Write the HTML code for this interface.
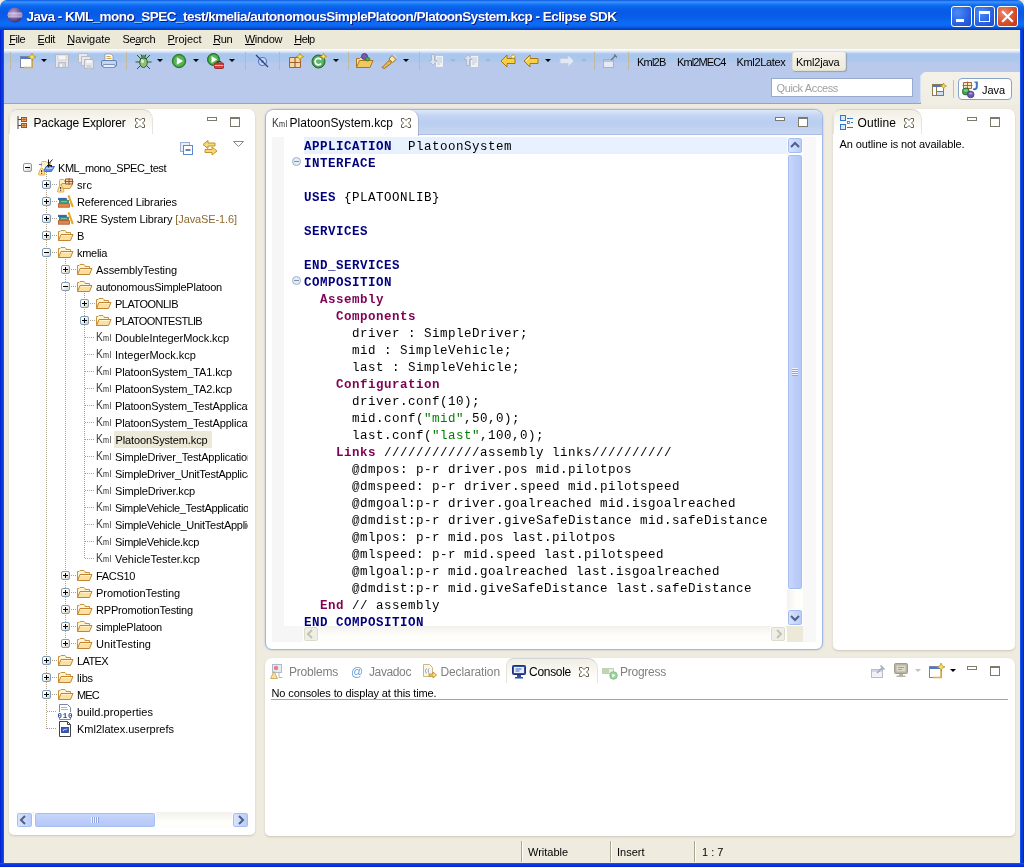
<!DOCTYPE html><html><head><meta charset="utf-8"><title>Java - Eclipse SDK</title><style>
*{box-sizing:border-box}
html,body{margin:0;padding:0}
html{background:#efebdf}
body{will-change:transform;width:1024px;height:867px;position:relative;overflow:hidden;background:#efebdf;font:11px "Liberation Sans",sans-serif;color:#000}
.abs{position:absolute}
#title{left:0;top:0;width:1024px;height:30px;border-radius:7px 7px 0 0;
 background:linear-gradient(#0a56e0 0%,#3a90fb 6%,#2c88f8 10%,#1577f4 14%,#0a68ee 20%,#085ee8 30%,#075ae6 45%,#095fea 60%,#0c68f2 72%,#0e6cf6 80%,#0a62ec 88%,#0650d8 93%,#0342bf 97%,#0338a8 100%)}
#title .txt{left:26.500px;top:9px;font:bold 13.500px "Liberation Sans",sans-serif;color:#fff;text-shadow:1px 1px 0 #0a1883;white-space:pre}
.wb{top:6px;width:21px;height:21px;border:1px solid #fff;border-radius:3px;background:radial-gradient(circle at 30% 30%,#4a8cf8 0%,#2a60e0 60%,#1a4cc8 100%)}
.wb.close{background:radial-gradient(circle at 30% 30%,#ec8a6c 0%,#d8502c 55%,#b93518 100%)}
#lb{left:0;top:30px;width:4px;height:837px;background:linear-gradient(90deg,#0019cf 0,#0831d9 25%,#0a3ce0 75%,#166aee 100%)}
#rb{left:1020px;top:30px;width:4px;height:837px;background:linear-gradient(90deg,#166aee 0,#0a3ce0 25%,#0831d9 75%,#0019cf 100%)}
#bb{left:0;top:863px;width:1024px;height:4px;background:linear-gradient(#166aee 0,#0a3ce0 25%,#0831d9 75%,#0019cf 100%)}
#menu{left:4px;top:30px;width:1016px;height:19px;background:#ece9d8}
#menu span{position:absolute;top:3px;white-space:pre}
#menu i{position:absolute;top:14px;height:1px;background:#000}
#tb{left:4px;top:49px;width:1016px;height:55px;background:linear-gradient(#ffffff 0,#e8eefb 2px,#aac6ec 5px,#adc8ed 12px,#b8c9ec 14px,#b8c9ec 100%)}
#tbline{left:4px;top:103px;width:917px;height:1px;background:#8ea5d3}
#persp{left:921px;top:72px;width:99px;height:33px;background:linear-gradient(#f3f1e9,#f0ede3);border-radius:5px 0 0 0}
.sep{width:1px;height:18px;background:#c2ba9e;top:52px}
.dd{width:0;height:0;border-left:3px solid transparent;border-right:3px solid transparent;border-top:3px solid #000;top:59px}
.ico{top:53px;width:16px;height:16px}
.panel{background:#fff;border-radius:7px 7px 5px 5px;box-shadow:0 1px 2px rgba(120,115,90,.3)}
.tab{font:12px "Liberation Sans",sans-serif;white-space:pre;margin-top:1px}
.tree{font:11px "Liberation Sans",sans-serif;white-space:pre}
.tl{position:absolute;white-space:pre;height:17px;line-height:18px;padding:0 2px}
.code{font:12.5px "Liberation Mono",monospace;letter-spacing:.5px;white-space:pre;line-height:20px;height:17px;position:absolute;left:304px}
.k{color:#00007f;font-weight:bold}
.m{color:#7f0055;font-weight:bold}
.s{color:#007f00}
.pm{width:9px;height:9px;border:1px solid #7f9db9;background:linear-gradient(135deg,#fff 30%,#d4d0c0);border-radius:2px}
.pm:before{content:"";position:absolute;left:1px;top:3px;width:5px;height:1px;background:#000}
.pm.plus:after{content:"";position:absolute;left:3px;top:1px;width:1px;height:5px;background:#000}
.dotv{width:1px;background-image:linear-gradient(#a8a08c 50%,transparent 50%);background-size:1px 2px}
.doth{height:1px;background-image:linear-gradient(90deg,#a8a08c 50%,transparent 50%);background-size:2px 1px}
.sbtn{background:linear-gradient(90deg,#dbe5fd,#b9ccf8);border:1px solid #fff;border-radius:3px;box-shadow:inset 0 0 0 1px #a6bdf4}
</style></head><body>
<div class="abs" id="title"><span class="abs txt" style="letter-spacing:-0.516px">Java - KML_mono_SPEC_test/kmelia/autonomousSimplePlatoon/PlatoonSystem.kcp - Eclipse SDK</span>
<svg class="abs" style="left:6.500px;top:7px" width="16" height="16" viewBox="0 0 17 17"><defs><radialGradient id="eg" cx="40%" cy="35%" r="70%"><stop offset="0" stop-color="#b9a0d8"/><stop offset="1" stop-color="#3b2a6e"/></radialGradient></defs><circle cx="8.5" cy="8.5" r="8" fill="url(#eg)"/><rect x="1" y="6" width="15" height="1" fill="#e8ddf5"/><rect x="0.5" y="8" width="16" height="1" fill="#e8ddf5"/><rect x="1" y="10" width="15" height="1" fill="#e8ddf5"/></svg>
<div class="abs wb" style="left:951px"><div class="abs" style="left:4px;top:12px;width:8px;height:3px;background:#fff"></div></div>
<div class="abs wb" style="left:974px"><div class="abs" style="left:4px;top:4px;width:11px;height:11px;border:1px solid #fff;border-top-width:3px"></div></div>
<div class="abs wb close" style="left:997px"><svg width="19" height="19" viewBox="0 0 19 19"><path d="M5 5l9 9M14 5l-9 9" stroke="#fff" stroke-width="2.2" stroke-linecap="square"/></svg></div>
</div>
<div class="abs" id="lb"></div><div class="abs" id="rb"></div><div class="abs" id="bb"></div>
<div class="abs" id="menu">
<span style="left:5.3px;letter-spacing:-0.434px">File</span>
<span style="left:33.5px;letter-spacing:-0.367px">Edit</span>
<span style="left:63.3px;letter-spacing:-0.053px">Navigate</span>
<span style="left:118.5px;letter-spacing:-0.343px">Search</span>
<span style="left:163.5px;letter-spacing:-0.036px">Project</span>
<span style="left:209.3px;letter-spacing:-0.396px">Run</span>
<span style="left:240.7px;letter-spacing:-0.271px">Window</span>
<span style="left:290.3px;letter-spacing:-0.581px">Help</span>
<i style="left:5px;width:6px"></i><i style="left:34px;width:6px"></i><i style="left:63px;width:7px"></i><i style="left:131px;width:5px"></i><i style="left:164px;width:7px"></i><i style="left:209px;width:7px"></i><i style="left:241px;width:10px"></i><i style="left:290px;width:7px"></i>
</div>
<div class="abs" id="tb"></div><div class="abs" id="tbline"></div><div class="abs" id="persp"></div>
<div class="abs sep" style="left:10px"></div>
<div class="abs sep" style="left:126px"></div>
<div class="abs sep" style="left:245px"></div>
<div class="abs sep" style="left:279px"></div>
<div class="abs sep" style="left:348px"></div>
<div class="abs sep" style="left:419px"></div>
<div class="abs sep" style="left:594px"></div>
<div class="abs sep" style="left:628px"></div>
<div class="abs dd" style="left:41px"></div>
<div class="abs dd" style="left:157px"></div>
<div class="abs dd" style="left:193px"></div>
<div class="abs dd" style="left:229px"></div>
<div class="abs dd" style="left:333px"></div>
<div class="abs dd" style="left:403px"></div>
<div class="abs dd" style="left:545px"></div>
<div class="abs dd" style="left:450px;border-top-color:#a9b4cc"></div>
<div class="abs dd" style="left:485px;border-top-color:#a9b4cc"></div>
<div class="abs dd" style="left:581px;border-top-color:#a9b4cc"></div>
<svg class="abs" style="left:20px;top:53px" width="16" height="16" viewBox="0 0 16 16"><rect x="0.5" y="3.5" width="12" height="11" fill="#fff" stroke="#7a86a8"/><rect x="1" y="4" width="11" height="2" fill="#4d78c8"/><path d="M12 8v6.5H4" fill="none" stroke="#e0b040" stroke-width="1.5"/><path d="M12 0l1.2 2.8L16 4l-2.8 1.2L12 8l-1.2-2.8L8 4l2.800-1.200z" fill="#f8e060" stroke="#b88a18" stroke-width=".7"/></svg>
<svg class="abs" style="left:54px;top:53px" width="16" height="16" viewBox="0 0 16 16"><path d="M1.500 1.500h13v13h-13z" fill="#e4e6ea" stroke="#b4b8c0"/><rect x="4" y="2" width="8" height="5" fill="#f6f6f8" stroke="#c0c4cc" stroke-width=".6"/><rect x="4.500" y="9.500" width="7" height="5" fill="#d4d6dc" stroke="#b4b8c0" stroke-width=".8"/><rect x="6" y="11" width="2" height="3" fill="#f4f4f6"/></svg>
<svg class="abs" style="left:78px;top:53px" width="16" height="16" viewBox="0 0 16 16"><path d="M0.500 0.500h9v9h-9z" fill="#e8eaee" stroke="#b8bcc4"/><path d="M3.500 3.500h9v9h-9z" fill="#e8eaee" stroke="#b8bcc4"/><path d="M6.500 6.500h9v9h-9z" fill="#e4e6ea" stroke="#b4b8c0"/><rect x="8.500" y="7" width="5" height="3" fill="#f6f6f8"/><rect x="8.500" y="12" width="5" height="3.500" fill="#d0d2d8"/></svg>
<svg class="abs" style="left:101px;top:53px" width="16" height="16" viewBox="0 0 16 16"><path d="M4 1h6l2 2v5H4z" fill="#fff" stroke="#8a93a8" stroke-width=".8"/><path d="M5.500 3.500h4M5.500 5.500h5" stroke="#d8a040" stroke-width="1"/><rect x="0.500" y="7.500" width="15" height="6" rx="1.500" fill="#c6d4ee" stroke="#5f7fb8"/><rect x="2" y="11.500" width="12" height="3" rx="1" fill="#e8eefa" stroke="#5f7fb8" stroke-width=".8"/></svg>
<svg class="abs" style="left:135px;top:53px" width="17" height="17" viewBox="0 0 17 17"><path d="M2 2l4 4M15 2l-4 4M0.500 9H5M16.500 9H12M2 16l4-4M15 16l-4-4M6 1.500l1.500 3M11 1.500l-1.500 3" stroke="#2a5a2a" stroke-width="1"/><ellipse cx="8.500" cy="9.500" rx="3.800" ry="5" fill="#8fbf7a" stroke="#2f5f2f"/><ellipse cx="7.500" cy="8" rx="1.500" ry="2.200" fill="#d6efc8"/><circle cx="8.500" cy="4.200" r="1.800" fill="#5a8f4a" stroke="#2f5f2f" stroke-width=".6"/></svg>
<svg class="abs" style="left:171px;top:53px" width="16" height="16" viewBox="0 0 16 16"><circle cx="8" cy="8" r="6.700" fill="#3c9a3c" stroke="#2a7a2a"/><circle cx="8" cy="8" r="5.300" fill="#58b458"/><path d="M5.800 4.200v7.600L12 8z" fill="#fff"/></svg>
<svg class="abs" style="left:207px;top:53px" width="17" height="16" viewBox="0 0 17 16"><circle cx="6.500" cy="6.500" r="6" fill="#3c9a3c" stroke="#1f6a1f"/><circle cx="6.500" cy="6.500" r="4.700" fill="#58b458"/><path d="M4.500 3v7L10.200 6.500z" fill="#fff"/><rect x="7.500" y="10" width="9" height="5.500" rx="1" fill="#d84040" stroke="#8a1c1c" stroke-width=".8"/><path d="M10 10V8.500h4V10" fill="none" stroke="#8a1c1c" stroke-width="1"/><rect x="7.500" y="12" width="9" height="1" fill="#f6b0a8"/></svg>
<svg class="abs" style="left:255px;top:54px" width="14" height="14" viewBox="0 0 14 14"><circle cx="7.500" cy="7.500" r="4" fill="#c8d8f0" stroke="#5a7cc0" stroke-width="1.200"/><circle cx="7.500" cy="7.500" r="1.500" fill="#7a98d0"/><path d="M1 1l12 12" stroke="#2a3f8a" stroke-width="1.300"/></svg>
<svg class="abs" style="left:288px;top:53px" width="16" height="16" viewBox="0 0 16 16"><path d="M1.500 4.500h11v10h-11z" fill="#f4d8a8" stroke="#a0622a"/><path d="M7 4.500v10M1.500 9.500h11" stroke="#a0622a" stroke-width="1.200"/><path d="M12 0l1.100 2.600L15.800 3.700l-2.700 1.100L12 7.500l-1.100-2.700L8.200 3.700l2.700-1.100z" fill="#f8e060" stroke="#b88a18" stroke-width=".7"/></svg>
<svg class="abs" style="left:311px;top:53px" width="16" height="16" viewBox="0 0 16 16"><circle cx="7.500" cy="8.500" r="6.500" fill="#3f9f4f" stroke="#1f6a2f"/><circle cx="7.500" cy="8.500" r="5" fill="#5cb86a"/><path d="M10 6.800a3.200 3.200 0 1 0 0 3.600" fill="none" stroke="#fff" stroke-width="1.700"/><path d="M12.500 0l1 2.400 2.400 1-2.400 1-1 2.400-1-2.400-2.400-1 2.400-1z" fill="#f8e060" stroke="#b88a18" stroke-width=".7"/></svg>
<svg class="abs" style="left:356px;top:53px" width="18" height="16" viewBox="0 0 18 16"><path d="M0.500 14.500v-9h3l1.500-1.500h6v2h3.500" fill="#f8e0a0" stroke="#a87820"/><path d="M0.500 14.500l3-7h13.500l-3 7z" fill="#f2c860" stroke="#a87820"/><circle cx="8.500" cy="3.500" r="3" fill="#7a5ab0" stroke="#40287a" stroke-width=".8"/><circle cx="11.500" cy="6" r="2" fill="#4fa84f" stroke="#1f6a1f" stroke-width=".6"/></svg>
<svg class="abs" style="left:381px;top:53px" width="17" height="16" viewBox="0 0 17 16"><path d="M1 14.500l7-7 2.500 2.500-7 5.500z" fill="#e8b84a" stroke="#9a6a10" stroke-width=".9"/><path d="M8 6l3-3.500 4 4L11.500 9.500z" fill="#f8e8a8" stroke="#9a6a10" stroke-width=".9"/><path d="M12.500 1.500l3 3" stroke="#c8d4e8" stroke-width="2"/></svg>
<svg class="abs" style="left:429px;top:54px" width="16" height="15" viewBox="0 0 16 15"><path d="M6.500 1.500h8v12h-8z" fill="#eef1f6" stroke="#c0c6d4"/><path d="M8 4h5M8 6h5M8 8h5M8 10h3" stroke="#c4cad8" stroke-width="1"/><path d="M2.500 0.500h3v6h2.500l-4 5-4-5h2.500z" fill="#dde3ee" stroke="#a9b3c8" stroke-width=".9"/></svg>
<svg class="abs" style="left:464px;top:54px" width="16" height="15" viewBox="0 0 16 15"><path d="M6.500 1.500h8v12h-8z" fill="#eef1f6" stroke="#c0c6d4"/><path d="M8 4h5M8 6h5M8 8h5M8 10h3" stroke="#c4cad8" stroke-width="1"/><path d="M4 0.500l4 5h-2.500v6h-3v-6H0z" fill="#dde3ee" stroke="#a9b3c8" stroke-width=".9"/></svg>
<svg class="abs" style="left:500px;top:54px" width="18" height="14" viewBox="0 0 18 14"><path d="M7 1L1 7l6 6V9.500h8v-5H7z" fill="#f8d048" stroke="#a87810" stroke-width="1"/><path d="M13 0l.8 1.800L15.600 2.600l-1.800.8L13 5.200l-.8-1.800-1.800-.8 1.800-.8z" fill="#fff8c0" stroke="#b88a18" stroke-width=".5"/></svg>
<svg class="abs" style="left:523px;top:54px" width="16" height="14" viewBox="0 0 16 14"><path d="M7 1L1 7l6 6V9.500h8v-5H7z" fill="#f8d048" stroke="#a87810" stroke-width="1"/><path d="M7 3.200L3 7" stroke="#fff2b0" stroke-width="1"/></svg>
<svg class="abs" style="left:559px;top:54px" width="16" height="14" viewBox="0 0 16 14"><path d="M9 1l6 6-6 6V9.500H1v-5h8z" fill="#e2e8f4" stroke="#c4cce0" stroke-width="1"/></svg>
<svg class="abs" style="left:603px;top:54px" width="15" height="14" viewBox="0 0 15 14"><rect x="0.500" y="5.500" width="10" height="8" fill="#e6eaf2" stroke="#a8b0c4"/><rect x="1" y="6" width="9" height="2" fill="#b8c4dc"/><path d="M8 6l5-5M11 0.500l3 3" stroke="#6a7488" stroke-width="1.200"/></svg>
<span class="abs" style="left:637px;top:56px;white-space:pre;letter-spacing:-0.781px">Kml2B</span>
<span class="abs" style="left:677px;top:56px;white-space:pre;letter-spacing:-0.891px">Kml2MEC4</span>
<span class="abs" style="left:736.5px;top:56px;white-space:pre;letter-spacing:-0.332px">Kml2Latex</span>
<div class="abs" style="left:792px;top:51px;width:54px;height:20px;background:linear-gradient(#f6f4ec,#ece9dc);border:1px solid #e2dfd2;border-radius:3px;box-shadow:1px 1px 1px rgba(110,110,100,.45)"></div>
<span class="abs" style="left:796px;top:56px;white-space:pre;letter-spacing:-0.219px">Kml2java</span>
<div class="abs" style="left:771px;top:78px;width:142px;height:19px;background:#fff;border:1px solid #98aad0"></div>
<span class="abs" style="left:776.500px;top:81.500px;color:#a0a0a0;font-size:11px;white-space:pre;letter-spacing:-0.378px">Quick Access</span>
<div class="abs" style="left:916px;top:75px;width:5px;height:28px;border-right:1px solid #d6e0f4;border-radius:0 0 4px 0"></div>
<svg class="abs" style="left:932px;top:83px" width="15" height="13" viewBox="0 0 15 13"><rect x="0.500" y="1.500" width="11" height="11" fill="#fff" stroke="#8a7a50"/><rect x="1" y="2" width="10" height="2" fill="#4d78c8"/><path d="M4.500 4v8.500M4.500 8.500h7" stroke="#8a7a50"/><rect x="5" y="9" width="6" height="3" fill="#cfe0f4"/><path d="M11.500 0l.9 2.100 2.100.9-2.100.9-.9 2.100-.9-2.100-2.100-.9 2.100-.9z" fill="#f8e060" stroke="#b88a18" stroke-width=".7"/></svg>
<div class="abs" style="left:953px;top:80px;width:1px;height:18px;background:#c8c0a4"></div>
<div class="abs" style="left:958px;top:78px;width:54px;height:22px;background:#fff;border:1px solid #86a3c8;border-radius:4px"></div>
<svg class="abs" style="left:962px;top:81px" width="17" height="18" viewBox="0 0 17 18"><path d="M1.500 1.500h8v6h-8zM5.500 0.500v7.500M0.500 4.500h10" fill="#f8e4c8" stroke="#a8683a" stroke-width="1"/><path d="M14.800 1v5.200a2.200 2.200 0 0 1-3.600 1.500" fill="none" stroke="#3a78c0" stroke-width="2"/><path d="M12.500 1.200h3.300" stroke="#3a78c0" stroke-width="1.400"/><circle cx="3.800" cy="10.500" r="3.500" fill="#3f9f4f" stroke="#1f6a2f" stroke-width=".8"/><ellipse cx="3.800" cy="9.500" rx="2.200" ry="1.200" fill="#7fcf8a"/><circle cx="8.700" cy="13.500" r="3.300" fill="#6a58b0" stroke="#483088" stroke-width=".8"/><ellipse cx="8.700" cy="12.500" rx="2" ry="1.100" fill="#a898d8"/></svg>
<span class="abs" style="left:982px;top:84px;white-space:pre">Java</span>
<div class="abs panel" style="left:9px;top:109px;width:246px;height:726px"></div>
<div class="abs" style="left:9px;top:109px;width:144px;height:25px;border-radius:8px 10px 0 0;border:1px solid #e6e4da;border-top-color:#cfd5df;border-bottom:none;background:linear-gradient(#f1eee3 0,#f8f7f1 45%,#fff 90%)"></div>
<svg class="abs" style="left:17px;top:116px" width="10" height="13" viewBox="0 0 10 13"><path d="M1 0v13M1 3.500h3M1 9.500h3" stroke="#444" stroke-width="1" fill="none"/><rect x="4.500" y="1.500" width="5" height="4" fill="#f0b070" stroke="#a0522a"/><rect x="4.500" y="7.500" width="5" height="4" fill="#f0b070" stroke="#a0522a"/><path d="M7 1.500v4M7 7.500v4M4.500 3.500h5M4.500 9.500h5" stroke="#a0522a" stroke-width=".7"/></svg>
<span class="abs tab" style="left:33.500px;top:115px;letter-spacing:-0.170px">Package Explorer</span>
<svg class="abs" style="left:135px;top:118px" width="10" height="10" viewBox="0 0 10 10"><path d="M0.500 0.500H3L5 2.500L7 0.500H9.500V3L7.500 5L9.500 7V9.500H7L5 7.500L3 9.500H0.500V7L2.500 5L0.500 3Z" fill="#fff" stroke="#66624f" stroke-width="1"/></svg>
<div class="abs" style="left:207px;top:117px;width:10px;height:4px;border:1px solid #7d7a6b;background:#fff"></div><div class="abs" style="left:230px;top:117px;width:10px;height:10px;border:1px solid #7d7a6b;border-top-width:2px;background:#fff"></div>
<svg class="abs" style="left:180px;top:142px" width="14" height="13" viewBox="0 0 14 13"><rect x="0.500" y="0.500" width="9" height="9" fill="#e8eef8" stroke="#9ab0d8"/><rect x="3.500" y="3.500" width="9" height="9" fill="#fff" stroke="#5f86c8"/><path d="M5.500 8h5" stroke="#1f4fa8" stroke-width="1.400"/></svg>
<svg class="abs" style="left:202px;top:140px" width="16" height="16" viewBox="0 0 16 16"><path d="M6 0.500L1 4.500l5 4V6h7V3H6z" fill="#f8d878" stroke="#c08a18" stroke-width=".9"/><path d="M10 7l5 4-5 4v-2.500H3v-3h7z" fill="#f8d878" stroke="#c08a18" stroke-width=".9"/></svg>
<svg class="abs" style="left:233px;top:141px" width="11" height="6" viewBox="0 0 11 6"><path d="M0.500 0.500h10l-5 5z" fill="#fff" stroke="#7a7a7a" stroke-width=".9"/></svg>
<div class="abs" style="left:16px;top:159px;width:232px;height:652px;overflow:hidden">
<div class="abs dotv" style="left:30px;top:13px;height:557px"></div>
<div class="abs dotv" style="left:49px;top:98px;height:387px"></div>
<div class="abs dotv" style="left:68px;top:132px;height:268px"></div>
<div class="abs pm " style="left:7px;top:4px"></div>
<svg class="abs" style="left:22px;top:0px" width="17" height="17" viewBox="0 0 17 17"><path d="M3.500 7.500V3.500Q3.500 2.500 4.500 2.500H8L9 3.500H12.500V7.500" fill="#fdf0c4" stroke="#e0b060" stroke-width=".9"/><path d="M1 5.500h3" stroke="#7a6ab0" stroke-width="1"/><path d="M5.500 12.500L8 7.500H16.500L13.500 12.500z" fill="#5b8ff0" stroke="#3058c0" stroke-width=".8"/><path d="M8.500 8.500h6.500l-.8 1.300H7.800z" fill="#cfe0fb"/><path d="M10.500 0.500v8M10.500 5l4-4.500M10.500 5l3.500 3M9 6.500h5" stroke="#1a1a1a" stroke-width="1" fill="none"/><g transform="translate(0 8.500)"><path d="M3.500 0.500Q4.500 0.500 5 1.500L7 6.500Q7 7.500 6 7.500H1.500Q0.500 7.500 0.500 6.500L2.500 1.500Q3 0.500 3.500 0.500z" fill="#fde9a8" stroke="#e0a030" stroke-width=".9"/><path d="M3.700 2.500v2.300M3.700 5.600v.9" stroke="#222" stroke-width="1"/></g></svg>
<span class="tl" style="left:40px;top:0px;letter-spacing:-0.454px">KML_mono_SPEC_test</span>
<div class="abs doth" style="left:36px;top:25px;width:5px"></div>
<div class="abs pm plus" style="left:26px;top:21px"></div>
<svg class="abs" style="left:41px;top:19px" width="17" height="15" viewBox="0 0 17 15"><path d="M2.500 10.500V2.500Q2.500 1.500 3.500 1.500H6.500L7.500 2.500H9.500V5" fill="#fdf0c4" stroke="#d8a048" stroke-width=".9"/><path d="M2.500 10.500L5 5.500H16L13 10.500z" fill="#fbdc98" stroke="#c88a38" stroke-width=".9"/><path d="M8.500 1h7v5h-7zM12 0v6.500M7.500 3.500h9" fill="#f4d4b0" stroke="#8a4a2a" stroke-width=".9"/><g transform="translate(0 6.500)"><path d="M3.500 0.500Q4.500 0.500 5 1.500L7 6.500Q7 7.500 6 7.500H1.500Q0.500 7.500 0.500 6.500L2.500 1.500Q3 0.500 3.500 0.500z" fill="#fde9a8" stroke="#e0a030" stroke-width=".9"/><path d="M3.700 2.500v2.300M3.700 5.600v.9" stroke="#222" stroke-width="1"/></g></svg>
<span class="tl" style="left:59px;top:17px;letter-spacing:0.109px">src</span>
<div class="abs doth" style="left:36px;top:42px;width:5px"></div>
<div class="abs pm plus" style="left:26px;top:38px"></div>
<svg class="abs" style="left:42px;top:35px" width="16" height="14" viewBox="0 0 16 14"><g transform="translate(0 .7)"><rect x="0.500" y="3.500" width="8" height="1.500" fill="#2a6ac8" stroke="#1f4f9f" stroke-width=".6"/><rect x="1.500" y="5.500" width="9" height="3" fill="#3aa078" stroke="#1f6f4f" stroke-width=".7"/><path d="M3 7h6" stroke="#9fd8b8" stroke-width=".8"/><rect x="0.500" y="9" width="11" height="3.500" fill="#e08850" stroke="#b8501c" stroke-width=".8"/><path d="M10.800 1.500l3.700 10" fill="none" stroke="#e8a820" stroke-width="2.200" stroke-dasharray="1.600 1.400" stroke-linecap="round"/></g></svg>
<span class="tl" style="left:59px;top:34px;letter-spacing:-0.106px">Referenced Libraries</span>
<div class="abs doth" style="left:36px;top:59px;width:5px"></div>
<div class="abs pm plus" style="left:26px;top:55px"></div>
<svg class="abs" style="left:42px;top:52px" width="16" height="14" viewBox="0 0 16 14"><g transform="translate(0 .7)"><rect x="0.500" y="3.500" width="8" height="1.500" fill="#2a6ac8" stroke="#1f4f9f" stroke-width=".6"/><rect x="1.500" y="5.500" width="9" height="3" fill="#3aa078" stroke="#1f6f4f" stroke-width=".7"/><path d="M3 7h6" stroke="#9fd8b8" stroke-width=".8"/><rect x="0.500" y="9" width="11" height="3.500" fill="#e08850" stroke="#b8501c" stroke-width=".8"/><path d="M10.800 1.500l3.700 10" fill="none" stroke="#e8a820" stroke-width="2.200" stroke-dasharray="1.600 1.400" stroke-linecap="round"/></g></svg>
<span class="tl" style="left:59px;top:51px;letter-spacing:-0.104px">JRE System Library <span style="color:#8a6a32">[JavaSE-1.6]</span></span>
<div class="abs doth" style="left:36px;top:76px;width:5px"></div>
<div class="abs pm plus" style="left:26px;top:72px"></div>
<svg class="abs" style="left:42px;top:71px" width="16" height="11" viewBox="0 0 16 11"><path d="M0.500 10.500V1.500H2L3 0.500H7L8 1.500V2.500H12.500V4.500" fill="#fff4d4" stroke="#c8923e"/><path d="M0.500 10.500L3 4.500H15L12.500 10.500Z" fill="#fbe0a0" stroke="#c08434"/><path d="M3.600 5.500H13.500" stroke="#fff3cf" stroke-width="1"/></svg>
<span class="tl" style="left:59px;top:68px;letter-spacing:-0.344px">B</span>
<div class="abs doth" style="left:36px;top:93px;width:5px"></div>
<div class="abs pm " style="left:26px;top:89px"></div>
<svg class="abs" style="left:42px;top:88px" width="16" height="11" viewBox="0 0 16 11"><path d="M0.500 10.500V1.500H2L3 0.500H7L8 1.500V2.500H12.500V4.500" fill="#fff4d4" stroke="#c8923e"/><path d="M0.500 10.500L3 4.500H15L12.500 10.500Z" fill="#fbe0a0" stroke="#c08434"/><path d="M3.600 5.500H13.500" stroke="#fff3cf" stroke-width="1"/></svg>
<span class="tl" style="left:59px;top:85px;letter-spacing:-0.299px">kmelia</span>
<div class="abs doth" style="left:55px;top:110px;width:5px"></div>
<div class="abs pm plus" style="left:45px;top:106px"></div>
<svg class="abs" style="left:61px;top:105px" width="16" height="11" viewBox="0 0 16 11"><path d="M0.500 10.500V1.500H2L3 0.500H7L8 1.500V2.500H12.500V4.500" fill="#fff4d4" stroke="#c8923e"/><path d="M0.500 10.500L3 4.500H15L12.500 10.500Z" fill="#fbe0a0" stroke="#c08434"/><path d="M3.600 5.500H13.500" stroke="#fff3cf" stroke-width="1"/></svg>
<span class="tl" style="left:78px;top:102px;letter-spacing:-0.103px">AssemblyTesting</span>
<div class="abs doth" style="left:55px;top:127px;width:5px"></div>
<div class="abs pm " style="left:45px;top:123px"></div>
<svg class="abs" style="left:61px;top:122px" width="16" height="11" viewBox="0 0 16 11"><path d="M0.500 10.500V1.500H2L3 0.500H7L8 1.500V2.500H12.500V4.500" fill="#fff4d4" stroke="#c8923e"/><path d="M0.500 10.500L3 4.500H15L12.500 10.500Z" fill="#fbe0a0" stroke="#c08434"/><path d="M3.600 5.500H13.500" stroke="#fff3cf" stroke-width="1"/></svg>
<span class="tl" style="left:78px;top:119px;letter-spacing:-0.238px">autonomousSimplePlatoon</span>
<div class="abs doth" style="left:74px;top:144px;width:5px"></div>
<div class="abs pm plus" style="left:64px;top:140px"></div>
<svg class="abs" style="left:80px;top:139px" width="16" height="11" viewBox="0 0 16 11"><path d="M0.500 10.500V1.500H2L3 0.500H7L8 1.500V2.500H12.500V4.500" fill="#fff4d4" stroke="#c8923e"/><path d="M0.500 10.500L3 4.500H15L12.500 10.500Z" fill="#fbe0a0" stroke="#c08434"/><path d="M3.600 5.500H13.500" stroke="#fff3cf" stroke-width="1"/></svg>
<span class="tl" style="left:97px;top:136px;letter-spacing:-0.506px">PLATOONLIB</span>
<div class="abs doth" style="left:74px;top:161px;width:5px"></div>
<div class="abs pm plus" style="left:64px;top:157px"></div>
<svg class="abs" style="left:80px;top:156px" width="16" height="11" viewBox="0 0 16 11"><path d="M0.500 10.500V1.500H2L3 0.500H7L8 1.500V2.500H12.500V4.500" fill="#fff4d4" stroke="#c8923e"/><path d="M0.500 10.500L3 4.500H15L12.500 10.500Z" fill="#fbe0a0" stroke="#c08434"/><path d="M3.600 5.500H13.500" stroke="#fff3cf" stroke-width="1"/></svg>
<span class="tl" style="left:97px;top:153px;letter-spacing:-0.656px">PLATOONTESTLIB</span>
<div class="abs doth" style="left:69px;top:178px;width:9px"></div>
<span class="abs" style="left:79.5px;top:170.5px;font:12.500px 'Liberation Sans',sans-serif;color:#3a3a3a;transform:scaleX(.82);transform-origin:0 0;line-height:14px;height:14px">K</span><span class="abs" style="left:86.5px;top:174.5px;font:8.500px 'Liberation Sans',sans-serif;color:#1a1a1a;line-height:9px;height:9px;transform:scaleX(.85);transform-origin:0 0;letter-spacing:.8px">ml</span>
<span class="tl" style="left:97px;top:170px;letter-spacing:-0.074px">DoubleIntegerMock.kcp</span>
<div class="abs doth" style="left:69px;top:195px;width:9px"></div>
<span class="abs" style="left:79.5px;top:187.5px;font:12.500px 'Liberation Sans',sans-serif;color:#3a3a3a;transform:scaleX(.82);transform-origin:0 0;line-height:14px;height:14px">K</span><span class="abs" style="left:86.5px;top:191.5px;font:8.500px 'Liberation Sans',sans-serif;color:#1a1a1a;line-height:9px;height:9px;transform:scaleX(.85);transform-origin:0 0;letter-spacing:.8px">ml</span>
<span class="tl" style="left:97px;top:187px;letter-spacing:0.020px">IntegerMock.kcp</span>
<div class="abs doth" style="left:69px;top:212px;width:9px"></div>
<span class="abs" style="left:79.5px;top:204.5px;font:12.500px 'Liberation Sans',sans-serif;color:#3a3a3a;transform:scaleX(.82);transform-origin:0 0;line-height:14px;height:14px">K</span><span class="abs" style="left:86.5px;top:208.5px;font:8.500px 'Liberation Sans',sans-serif;color:#1a1a1a;line-height:9px;height:9px;transform:scaleX(.85);transform-origin:0 0;letter-spacing:.8px">ml</span>
<span class="tl" style="left:97px;top:204px;letter-spacing:-0.126px">PlatoonSystem_TA1.kcp</span>
<div class="abs doth" style="left:69px;top:229px;width:9px"></div>
<span class="abs" style="left:79.5px;top:221.5px;font:12.500px 'Liberation Sans',sans-serif;color:#3a3a3a;transform:scaleX(.82);transform-origin:0 0;line-height:14px;height:14px">K</span><span class="abs" style="left:86.5px;top:225.5px;font:8.500px 'Liberation Sans',sans-serif;color:#1a1a1a;line-height:9px;height:9px;transform:scaleX(.85);transform-origin:0 0;letter-spacing:.8px">ml</span>
<span class="tl" style="left:97px;top:221px;letter-spacing:-0.126px">PlatoonSystem_TA2.kcp</span>
<div class="abs doth" style="left:69px;top:246px;width:9px"></div>
<span class="abs" style="left:79.5px;top:238.5px;font:12.500px 'Liberation Sans',sans-serif;color:#3a3a3a;transform:scaleX(.82);transform-origin:0 0;line-height:14px;height:14px">K</span><span class="abs" style="left:86.5px;top:242.5px;font:8.500px 'Liberation Sans',sans-serif;color:#1a1a1a;line-height:9px;height:9px;transform:scaleX(.85);transform-origin:0 0;letter-spacing:.8px">ml</span>
<span class="tl" style="left:97px;top:238px;letter-spacing:-0.154px">PlatoonSystem_TestApplication1.kcp</span>
<div class="abs doth" style="left:69px;top:263px;width:9px"></div>
<span class="abs" style="left:79.5px;top:255.5px;font:12.500px 'Liberation Sans',sans-serif;color:#3a3a3a;transform:scaleX(.82);transform-origin:0 0;line-height:14px;height:14px">K</span><span class="abs" style="left:86.5px;top:259.5px;font:8.500px 'Liberation Sans',sans-serif;color:#1a1a1a;line-height:9px;height:9px;transform:scaleX(.85);transform-origin:0 0;letter-spacing:.8px">ml</span>
<span class="tl" style="left:97px;top:255px;letter-spacing:-0.154px">PlatoonSystem_TestApplication2.kcp</span>
<div class="abs doth" style="left:69px;top:280px;width:9px"></div>
<span class="abs" style="left:79.5px;top:272.5px;font:12.500px 'Liberation Sans',sans-serif;color:#3a3a3a;transform:scaleX(.82);transform-origin:0 0;line-height:14px;height:14px">K</span><span class="abs" style="left:86.5px;top:276.5px;font:8.500px 'Liberation Sans',sans-serif;color:#1a1a1a;line-height:9px;height:9px;transform:scaleX(.85);transform-origin:0 0;letter-spacing:.8px">ml</span>
<span class="tl" style="left:97px;top:272px;background:#ece9d8;margin-left:1px;padding-left:1.500px;padding-right:4.500px;letter-spacing:-0.127px">PlatoonSystem.kcp</span>
<div class="abs doth" style="left:69px;top:297px;width:9px"></div>
<span class="abs" style="left:79.5px;top:289.5px;font:12.500px 'Liberation Sans',sans-serif;color:#3a3a3a;transform:scaleX(.82);transform-origin:0 0;line-height:14px;height:14px">K</span><span class="abs" style="left:86.5px;top:293.5px;font:8.500px 'Liberation Sans',sans-serif;color:#1a1a1a;line-height:9px;height:9px;transform:scaleX(.85);transform-origin:0 0;letter-spacing:.8px">ml</span>
<span class="tl" style="left:97px;top:289px;letter-spacing:-0.183px">SimpleDriver_TestApplication.kcp</span>
<div class="abs doth" style="left:69px;top:314px;width:9px"></div>
<span class="abs" style="left:79.5px;top:306.5px;font:12.500px 'Liberation Sans',sans-serif;color:#3a3a3a;transform:scaleX(.82);transform-origin:0 0;line-height:14px;height:14px">K</span><span class="abs" style="left:86.5px;top:310.5px;font:8.500px 'Liberation Sans',sans-serif;color:#1a1a1a;line-height:9px;height:9px;transform:scaleX(.85);transform-origin:0 0;letter-spacing:.8px">ml</span>
<span class="tl" style="left:97px;top:306px;letter-spacing:-0.251px">SimpleDriver_UnitTestApplication.kcp</span>
<div class="abs doth" style="left:69px;top:331px;width:9px"></div>
<span class="abs" style="left:79.5px;top:323.5px;font:12.500px 'Liberation Sans',sans-serif;color:#3a3a3a;transform:scaleX(.82);transform-origin:0 0;line-height:14px;height:14px">K</span><span class="abs" style="left:86.5px;top:327.5px;font:8.500px 'Liberation Sans',sans-serif;color:#1a1a1a;line-height:9px;height:9px;transform:scaleX(.85);transform-origin:0 0;letter-spacing:.8px">ml</span>
<span class="tl" style="left:97px;top:323px;letter-spacing:-0.158px">SimpleDriver.kcp</span>
<div class="abs doth" style="left:69px;top:348px;width:9px"></div>
<span class="abs" style="left:79.5px;top:340.5px;font:12.500px 'Liberation Sans',sans-serif;color:#3a3a3a;transform:scaleX(.82);transform-origin:0 0;line-height:14px;height:14px">K</span><span class="abs" style="left:86.5px;top:344.5px;font:8.500px 'Liberation Sans',sans-serif;color:#1a1a1a;line-height:9px;height:9px;transform:scaleX(.85);transform-origin:0 0;letter-spacing:.8px">ml</span>
<span class="tl" style="left:97px;top:340px;letter-spacing:-0.332px">SimpleVehicle_TestApplication.kcp</span>
<div class="abs doth" style="left:69px;top:365px;width:9px"></div>
<span class="abs" style="left:79.5px;top:357.5px;font:12.500px 'Liberation Sans',sans-serif;color:#3a3a3a;transform:scaleX(.82);transform-origin:0 0;line-height:14px;height:14px">K</span><span class="abs" style="left:86.5px;top:361.5px;font:8.500px 'Liberation Sans',sans-serif;color:#1a1a1a;line-height:9px;height:9px;transform:scaleX(.85);transform-origin:0 0;letter-spacing:.8px">ml</span>
<span class="tl" style="left:97px;top:357px;letter-spacing:-0.275px">SimpleVehicle_UnitTestApplication.kcp</span>
<div class="abs doth" style="left:69px;top:382px;width:9px"></div>
<span class="abs" style="left:79.5px;top:374.5px;font:12.500px 'Liberation Sans',sans-serif;color:#3a3a3a;transform:scaleX(.82);transform-origin:0 0;line-height:14px;height:14px">K</span><span class="abs" style="left:86.5px;top:378.5px;font:8.500px 'Liberation Sans',sans-serif;color:#1a1a1a;line-height:9px;height:9px;transform:scaleX(.85);transform-origin:0 0;letter-spacing:.8px">ml</span>
<span class="tl" style="left:97px;top:374px;letter-spacing:-0.311px">SimpleVehicle.kcp</span>
<div class="abs doth" style="left:69px;top:399px;width:9px"></div>
<span class="abs" style="left:79.5px;top:391.5px;font:12.500px 'Liberation Sans',sans-serif;color:#3a3a3a;transform:scaleX(.82);transform-origin:0 0;line-height:14px;height:14px">K</span><span class="abs" style="left:86.5px;top:395.5px;font:8.500px 'Liberation Sans',sans-serif;color:#1a1a1a;line-height:9px;height:9px;transform:scaleX(.85);transform-origin:0 0;letter-spacing:.8px">ml</span>
<span class="tl" style="left:97px;top:391px;letter-spacing:0.000px">VehicleTester.kcp</span>
<div class="abs doth" style="left:55px;top:416px;width:5px"></div>
<div class="abs pm plus" style="left:45px;top:412px"></div>
<svg class="abs" style="left:61px;top:411px" width="16" height="11" viewBox="0 0 16 11"><path d="M0.500 10.500V1.500H2L3 0.500H7L8 1.500V2.500H12.500V4.500" fill="#fff4d4" stroke="#c8923e"/><path d="M0.500 10.500L3 4.500H15L12.500 10.500Z" fill="#fbe0a0" stroke="#c08434"/><path d="M3.600 5.500H13.500" stroke="#fff3cf" stroke-width="1"/></svg>
<span class="tl" style="left:78px;top:408px;letter-spacing:-0.328px">FACS10</span>
<div class="abs doth" style="left:55px;top:433px;width:5px"></div>
<div class="abs pm plus" style="left:45px;top:429px"></div>
<svg class="abs" style="left:61px;top:428px" width="16" height="11" viewBox="0 0 16 11"><path d="M0.500 10.500V1.500H2L3 0.500H7L8 1.500V2.500H12.500V4.500" fill="#fff4d4" stroke="#c8923e"/><path d="M0.500 10.500L3 4.500H15L12.500 10.500Z" fill="#fbe0a0" stroke="#c08434"/><path d="M3.600 5.500H13.500" stroke="#fff3cf" stroke-width="1"/></svg>
<span class="tl" style="left:78px;top:425px;letter-spacing:-0.062px">PromotionTesting</span>
<div class="abs doth" style="left:55px;top:450px;width:5px"></div>
<div class="abs pm plus" style="left:45px;top:446px"></div>
<svg class="abs" style="left:61px;top:445px" width="16" height="11" viewBox="0 0 16 11"><path d="M0.500 10.500V1.500H2L3 0.500H7L8 1.500V2.500H12.500V4.500" fill="#fff4d4" stroke="#c8923e"/><path d="M0.500 10.500L3 4.500H15L12.500 10.500Z" fill="#fbe0a0" stroke="#c08434"/><path d="M3.600 5.500H13.500" stroke="#fff3cf" stroke-width="1"/></svg>
<span class="tl" style="left:78px;top:442px;letter-spacing:-0.182px">RPPromotionTesting</span>
<div class="abs doth" style="left:55px;top:467px;width:5px"></div>
<div class="abs pm plus" style="left:45px;top:463px"></div>
<svg class="abs" style="left:61px;top:462px" width="16" height="11" viewBox="0 0 16 11"><path d="M0.500 10.500V1.500H2L3 0.500H7L8 1.500V2.500H12.500V4.500" fill="#fff4d4" stroke="#c8923e"/><path d="M0.500 10.500L3 4.500H15L12.500 10.500Z" fill="#fbe0a0" stroke="#c08434"/><path d="M3.600 5.500H13.500" stroke="#fff3cf" stroke-width="1"/></svg>
<span class="tl" style="left:78px;top:459px;letter-spacing:-0.238px">simplePlatoon</span>
<div class="abs doth" style="left:55px;top:484px;width:5px"></div>
<div class="abs pm plus" style="left:45px;top:480px"></div>
<svg class="abs" style="left:61px;top:479px" width="16" height="11" viewBox="0 0 16 11"><path d="M0.500 10.500V1.500H2L3 0.500H7L8 1.500V2.500H12.500V4.500" fill="#fff4d4" stroke="#c8923e"/><path d="M0.500 10.500L3 4.500H15L12.500 10.500Z" fill="#fbe0a0" stroke="#c08434"/><path d="M3.600 5.500H13.500" stroke="#fff3cf" stroke-width="1"/></svg>
<span class="tl" style="left:78px;top:476px;letter-spacing:0.053px">UnitTesting</span>
<div class="abs doth" style="left:36px;top:501px;width:5px"></div>
<div class="abs pm plus" style="left:26px;top:497px"></div>
<svg class="abs" style="left:42px;top:496px" width="16" height="11" viewBox="0 0 16 11"><path d="M0.500 10.500V1.500H2L3 0.500H7L8 1.500V2.500H12.500V4.500" fill="#fff4d4" stroke="#c8923e"/><path d="M0.500 10.500L3 4.500H15L12.500 10.500Z" fill="#fbe0a0" stroke="#c08434"/><path d="M3.600 5.500H13.500" stroke="#fff3cf" stroke-width="1"/></svg>
<span class="tl" style="left:59px;top:493px;letter-spacing:-0.606px">LATEX</span>
<div class="abs doth" style="left:36px;top:518px;width:5px"></div>
<div class="abs pm plus" style="left:26px;top:514px"></div>
<svg class="abs" style="left:42px;top:513px" width="16" height="11" viewBox="0 0 16 11"><path d="M0.500 10.500V1.500H2L3 0.500H7L8 1.500V2.500H12.500V4.500" fill="#fff4d4" stroke="#c8923e"/><path d="M0.500 10.500L3 4.500H15L12.500 10.500Z" fill="#fbe0a0" stroke="#c08434"/><path d="M3.600 5.500H13.500" stroke="#fff3cf" stroke-width="1"/></svg>
<span class="tl" style="left:59px;top:510px;letter-spacing:-0.129px">libs</span>
<div class="abs doth" style="left:36px;top:535px;width:5px"></div>
<div class="abs pm plus" style="left:26px;top:531px"></div>
<svg class="abs" style="left:42px;top:530px" width="16" height="11" viewBox="0 0 16 11"><path d="M0.500 10.500V1.500H2L3 0.500H7L8 1.500V2.500H12.500V4.500" fill="#fff4d4" stroke="#c8923e"/><path d="M0.500 10.500L3 4.500H15L12.500 10.500Z" fill="#fbe0a0" stroke="#c08434"/><path d="M3.600 5.500H13.500" stroke="#fff3cf" stroke-width="1"/></svg>
<span class="tl" style="left:59px;top:527px;letter-spacing:-0.818px">MEC</span>
<div class="abs doth" style="left:31px;top:552px;width:9px"></div>
<svg class="abs" style="left:41px;top:545px" width="16" height="16" viewBox="0 0 16 16"><path d="M2.500 0.500h8l3 3v12h-11z" fill="#fff" stroke="#7a86a8"/><path d="M4 3.500h6M4 5.500h7" stroke="#c8a050" stroke-width=".8"/><rect x="1" y="8" width="14" height="6" fill="#fff"/><text x="0.500" y="14" font-family="Liberation Mono,monospace" font-size="7.500" font-weight="bold" fill="#2a4aa0" textLength="15">010</text></svg>
<span class="tl" style="left:59px;top:544px;letter-spacing:0.049px">build.properties</span>
<div class="abs doth" style="left:31px;top:569px;width:9px"></div>
<svg class="abs" style="left:41px;top:562px" width="16" height="16" viewBox="0 0 16 16"><path d="M2.500 0.500h8l3 3v12h-11z" fill="#fff" stroke="#444"/><path d="M10.500 0.500v3h3" fill="none" stroke="#444"/><rect x="4.500" y="6.500" width="7" height="5" fill="#3a5cc0" stroke="#1f3a8a" stroke-width=".8"/><path d="M6 10l1.500-2 1 1 1.500-1.500" stroke="#fff" stroke-width=".8" fill="none"/></svg>
<span class="tl" style="left:59px;top:561px;letter-spacing:-0.012px">Kml2latex.userprefs</span>
</div>
<div class="abs" style="left:16px;top:812px;width:232px;height:16px;background:linear-gradient(#f3f1ec,#fefefb 60%,#fdfdf9)"></div>
<div class="abs sbtn" style="left:16px;top:812px;width:17px;height:16px"></div><svg class="abs" style="left:19px;top:815px" width="10" height="10" viewBox="0 0 10 10"><path d="M6 1L2 5l4 4" fill="none" stroke="#4d6185" stroke-width="2"/></svg>
<div class="abs sbtn" style="left:232px;top:812px;width:17px;height:16px"></div><svg class="abs" style="left:236px;top:815px" width="10" height="10" viewBox="0 0 10 10"><path d="M3 1l4 4-4 4" fill="none" stroke="#4d6185" stroke-width="2"/></svg>
<div class="abs sbtn" style="left:34px;top:812px;width:122px;height:16px;background:linear-gradient(#c9d8fc,#bccdf9 50%,#b5c7f6)"></div>
<div class="abs" style="left:91px;top:817px;width:1px;height:6px;background:#eef3ff;box-shadow:1px 0 0 #8ea6e0"></div>
<div class="abs" style="left:93px;top:817px;width:1px;height:6px;background:#eef3ff;box-shadow:1px 0 0 #8ea6e0"></div>
<div class="abs" style="left:95px;top:817px;width:1px;height:6px;background:#eef3ff;box-shadow:1px 0 0 #8ea6e0"></div>
<div class="abs" style="left:97px;top:817px;width:1px;height:6px;background:#eef3ff;box-shadow:1px 0 0 #8ea6e0"></div>
<div class="abs" style="left:265px;top:109px;width:558px;height:541px;background:#fff;border:1px solid #9fb6e6;border-radius:9px 9px 7px 7px;box-shadow:0 0 2px rgba(110,140,210,.5)"></div>
<div class="abs" style="left:266px;top:110px;width:556px;height:25px;border-radius:8px 8px 0 0;background:linear-gradient(#dde7f9 0,#c2d4f3 25%,#bacef0 50%,#c0d1f0 70%,#c9d6f0 100%)"></div>
<div class="abs" style="left:266px;top:134px;width:556px;height:1px;background:#a9bde6"></div>
<div class="abs" style="left:266px;top:110px;width:153px;height:26px;background:#fff;border-radius:8px 9px 0 0;border-right:1px solid #a9b5d4"></div>
<span class="abs" style="left:271.5px;top:115.5px;font:12.500px 'Liberation Sans',sans-serif;color:#3a3a3a;transform:scaleX(.82);transform-origin:0 0;line-height:14px;height:14px">K</span><span class="abs" style="left:278.5px;top:119.5px;font:8.500px 'Liberation Sans',sans-serif;color:#1a1a1a;line-height:9px;height:9px;transform:scaleX(.85);transform-origin:0 0;letter-spacing:.8px">ml</span>
<span class="abs tab" style="left:289.500px;top:115px;letter-spacing:0.046px">PlatoonSystem.kcp</span>
<svg class="abs" style="left:401px;top:118px" width="10" height="10" viewBox="0 0 10 10"><path d="M0.500 0.500H3L5 2.500L7 0.500H9.500V3L7.500 5L9.500 7V9.500H7L5 7.500L3 9.500H0.500V7L2.500 5L0.500 3Z" fill="#fff" stroke="#66624f" stroke-width="1"/></svg>
<div class="abs" style="left:775px;top:117px;width:10px;height:4px;border:1px solid #7d7a6b;background:#fff"></div><div class="abs" style="left:798px;top:117px;width:10px;height:10px;border:1px solid #7d7a6b;border-top-width:2px;background:#fff"></div>
<div class="abs" style="left:272px;top:137px;width:12px;height:505px;background:#f6f6f6"></div>
<div class="abs" style="left:284px;top:626px;width:19px;height:16px;background:#f6f6f6"></div>
<div class="abs" style="left:304px;top:137px;width:483px;height:17px;background:#e8f2fe"></div>
<div class="code" style="top:137px"><span class="k">APPLICATION</span>  PlatoonSystem</div>
<div class="code" style="top:154px"><span class="k">INTERFACE</span></div>
<div class="code" style="top:188px"><span class="k">USES</span> {PLATOONLIB}</div>
<div class="code" style="top:222px"><span class="k">SERVICES</span></div>
<div class="code" style="top:256px"><span class="k">END_SERVICES</span></div>
<div class="code" style="top:273px"><span class="k">COMPOSITION</span></div>
<div class="code" style="top:290px">  <span class="m">Assembly</span></div>
<div class="code" style="top:307px">    <span class="m">Components</span></div>
<div class="code" style="top:324px">      driver : SimpleDriver;</div>
<div class="code" style="top:341px">      mid : SimpleVehicle;</div>
<div class="code" style="top:358px">      last : SimpleVehicle;</div>
<div class="code" style="top:375px">    <span class="m">Configuration</span></div>
<div class="code" style="top:392px">      driver.conf(10);</div>
<div class="code" style="top:409px">      mid.conf(<span class="s">"mid"</span>,50,0);</div>
<div class="code" style="top:426px">      last.conf(<span class="s">"last"</span>,100,0);</div>
<div class="code" style="top:443px">    <span class="m">Links</span> ////////////assembly links//////////</div>
<div class="code" style="top:460px">      @dmpos: p-r driver.pos mid.pilotpos</div>
<div class="code" style="top:477px">      @dmspeed: p-r driver.speed mid.pilotspeed</div>
<div class="code" style="top:494px">      @dmgoal:p-r driver.goalreached mid.isgoalreached</div>
<div class="code" style="top:511px">      @dmdist:p-r driver.giveSafeDistance mid.safeDistance</div>
<div class="code" style="top:528px">      @mlpos: p-r mid.pos last.pilotpos</div>
<div class="code" style="top:545px">      @mlspeed: p-r mid.speed last.pilotspeed</div>
<div class="code" style="top:562px">      @mlgoal:p-r mid.goalreached last.isgoalreached</div>
<div class="code" style="top:579px">      @dmdist:p-r mid.giveSafeDistance last.safeDistance</div>
<div class="code" style="top:596px">  <span class="m">End</span> // assembly</div>
<div class="code" style="top:613px"><span class="k">END</span> <span class="k">COMPOSITION</span></div>
<div class="abs" style="left:284px;top:626px;width:503px;height:16px;background:linear-gradient(#f3f1ec,#fefefb 60%,#fdfdf9)"></div>
<div class="abs" style="left:284px;top:626px;width:19px;height:16px;background:#f6f6f6"></div>
<svg class="abs" style="left:292px;top:157px" width="9" height="9" viewBox="0 0 9 9"><circle cx="4.500" cy="4.500" r="4" fill="#e4ecf6" stroke="#9eb0cc"/><path d="M2 4.500h5" stroke="#7a8eb0" stroke-width="1"/></svg>
<svg class="abs" style="left:292px;top:276px" width="9" height="9" viewBox="0 0 9 9"><circle cx="4.500" cy="4.500" r="4" fill="#e4ecf6" stroke="#9eb0cc"/><path d="M2 4.500h5" stroke="#7a8eb0" stroke-width="1"/></svg>
<div class="abs" style="left:303px;top:626px;width:16px;height:16px;background:#f0efe6;border:1px solid #fff;border-radius:3px;box-shadow:inset 0 0 0 1px #dcdacb"></div><svg class="abs" style="left:306px;top:629px" width="10" height="10" viewBox="0 0 10 10"><path d="M6 1L2 5l4 4" fill="none" stroke="#c4c2b4" stroke-width="2"/></svg>
<div class="abs" style="left:770px;top:626px;width:16px;height:16px;background:#f0efe6;border:1px solid #fff;border-radius:3px;box-shadow:inset 0 0 0 1px #dcdacb"></div><svg class="abs" style="left:774px;top:629px" width="10" height="10" viewBox="0 0 10 10"><path d="M3 1l4 4-4 4" fill="none" stroke="#c4c2b4" stroke-width="2"/></svg>
<div class="abs" style="left:787px;top:137px;width:16px;height:489px;background:linear-gradient(90deg,#f3f1ec,#fefefb 60%,#fdfdf9)"></div>
<div class="abs sbtn" style="left:787px;top:137px;width:16px;height:17px"></div><svg class="abs" style="left:790px;top:141px" width="10" height="10" viewBox="0 0 10 10"><path d="M1 6l4-4 4 4" fill="none" stroke="#4d6185" stroke-width="2"/></svg>
<div class="abs sbtn" style="left:787px;top:609px;width:16px;height:17px"></div><svg class="abs" style="left:790px;top:613px" width="10" height="10" viewBox="0 0 10 10"><path d="M1 3l4 4 4-4" fill="none" stroke="#4d6185" stroke-width="2"/></svg>
<div class="abs sbtn" style="left:787px;top:154px;width:16px;height:436px;background:linear-gradient(90deg,#c9d8fc,#bccdf9 50%,#b5c7f6)"></div>
<div class="abs" style="left:792px;top:368px;width:6px;height:1px;background:#eef3ff;box-shadow:0 1px 0 #8ea6e0"></div>
<div class="abs" style="left:792px;top:370px;width:6px;height:1px;background:#eef3ff;box-shadow:0 1px 0 #8ea6e0"></div>
<div class="abs" style="left:792px;top:372px;width:6px;height:1px;background:#eef3ff;box-shadow:0 1px 0 #8ea6e0"></div>
<div class="abs" style="left:792px;top:374px;width:6px;height:1px;background:#eef3ff;box-shadow:0 1px 0 #8ea6e0"></div>
<div class="abs" style="left:787px;top:626px;width:16px;height:16px;background:#ece9d8"></div>
<div class="abs" style="left:803px;top:137px;width:13px;height:505px;background:#f8f8f8"></div>
<div class="abs panel" style="left:833px;top:109px;width:182px;height:541px"></div>
<div class="abs" style="left:833px;top:109px;width:89px;height:25px;border-radius:8px 10px 0 0;border:1px solid #e6e4da;border-top-color:#cfd5df;border-bottom:none;background:linear-gradient(#f1eee3 0,#f8f7f1 45%,#fff 90%)"></div>
<svg class="abs" style="left:840px;top:115px" width="14" height="15" viewBox="0 0 14 15"><rect x="0.500" y="0.500" width="5" height="5" fill="#d8e8f8" stroke="#2f78c8"/><rect x="0.500" y="9.500" width="5" height="5" fill="#d8e8f8" stroke="#2f78c8"/><path d="M7 3.500h6M7 12.500h6" stroke="#2f78c8" stroke-width="1"/><rect x="7.500" y="6.500" width="2" height="2" fill="#fff" stroke="#2f78c8" stroke-width=".8"/><path d="M11 7.500h2" stroke="#2f78c8"/></svg>
<span class="abs tab" style="left:857.500px;top:115px;letter-spacing:0.067px">Outline</span>
<svg class="abs" style="left:904px;top:118px" width="10" height="10" viewBox="0 0 10 10"><path d="M0.500 0.500H3L5 2.500L7 0.500H9.500V3L7.500 5L9.500 7V9.500H7L5 7.500L3 9.500H0.500V7L2.500 5L0.500 3Z" fill="#fff" stroke="#66624f" stroke-width="1"/></svg>
<div class="abs" style="left:967px;top:117px;width:10px;height:4px;border:1px solid #7d7a6b;background:#fff"></div><div class="abs" style="left:990px;top:117px;width:10px;height:10px;border:1px solid #7d7a6b;border-top-width:2px;background:#fff"></div>
<span class="abs" style="left:839.500px;top:138px;white-space:pre;letter-spacing:-0.100px">An outline is not available.</span>
<div class="abs panel" style="left:265px;top:658px;width:750px;height:178px"></div>
<div class="abs" style="left:506px;top:658px;width:92px;height:25px;border-radius:8px 10px 0 0;border:1px solid #e6e4da;border-top-color:#cfd5df;border-bottom:none;background:linear-gradient(#f1eee3 0,#f8f7f1 45%,#fff 90%)"></div>
<svg class="abs" style="left:270px;top:664px" width="15" height="15" viewBox="0 0 15 15"><rect x="2.500" y="0.500" width="9" height="8" fill="#e6eaf4" stroke="#b0b8cc"/><circle cx="6" cy="4" r="2.200" fill="#e88080"/><path d="M9 8.500v5h3.500" stroke="#b0b8cc" fill="none"/><g transform="translate(0 7)"><path d="M4 0.500L0.500 7.500h7z" fill="#f8e0a0" stroke="#c8a050" stroke-width=".8"/></g></svg>
<span class="abs tab" style="left:289px;top:664px;color:#808080;letter-spacing:-0.211px">Problems</span>
<span class="abs tab" style="left:351px;top:664px;color:#6f9fd8">@</span>
<span class="abs tab" style="left:369px;top:664px;color:#808080;letter-spacing:-0.386px">Javadoc</span>
<svg class="abs" style="left:422px;top:664px" width="15" height="15" viewBox="0 0 15 15"><path d="M1.500 0.500h6l3 3v9h-9z" fill="#fbf6e6" stroke="#c8b888"/><path d="M5 4.500c-2 1-2 4 0 5M7 4.500c-1 1-1 4 0 5" stroke="#7a9ad0" fill="none" stroke-width=".9"/><path d="M7 10h4v-2l3.500 3-3.500 3v-2H7z" fill="#f8d878" stroke="#c08a18" stroke-width=".8"/></svg>
<span class="abs tab" style="left:440.500px;top:664px;color:#808080;letter-spacing:-0.109px">Declaration</span>
<svg class="abs" style="left:512px;top:665px" width="14" height="14" viewBox="0 0 14 14"><rect x="0.500" y="0.500" width="13" height="9" rx="1" fill="#2f4fa8" stroke="#1f2f78"/><rect x="2" y="2" width="10" height="6" fill="#e8eefc"/><path d="M3.500 4h6M3.500 6h4" stroke="#2f4fa8" stroke-width=".9"/><path d="M5 10h4v2h2v1.500H3V12h2z" fill="#2f4fa8"/></svg>
<span class="abs tab" style="left:529px;top:664px;letter-spacing:-0.290px">Console</span>
<svg class="abs" style="left:579px;top:667px" width="10" height="10" viewBox="0 0 10 10"><path d="M0.500 0.500H3L5 2.500L7 0.500H9.500V3L7.500 5L9.500 7V9.500H7L5 7.500L3 9.500H0.500V7L2.500 5L0.500 3Z" fill="#fff" stroke="#66624f" stroke-width="1"/></svg>
<svg class="abs" style="left:602px;top:667px" width="16" height="13" viewBox="0 0 16 13"><g opacity=".6"><rect x="0.500" y="1.500" width="11" height="5" fill="#d8e4d0" stroke="#9ab090"/><rect x="1" y="2" width="6" height="4" fill="#8fbf7a"/><circle cx="11.500" cy="8.500" r="3.800" fill="#5cb85c" stroke="#2f8a2f" stroke-width=".8"/><path d="M10.300 6.500v4l3-2z" fill="#fff"/></g></svg>
<span class="abs tab" style="left:620px;top:664px;color:#808080;letter-spacing:-0.254px">Progress</span>
<svg class="abs" style="left:871px;top:664px" width="15" height="14" viewBox="0 0 15 14"><rect x="0.500" y="5.500" width="11" height="8" fill="#f0f2f6" stroke="#b8bcc8"/><rect x="1" y="6" width="10" height="2" fill="#d0d6e4"/><path d="M6 9l6-6M9.500 1.500l4 4" stroke="#a0a8b8" stroke-width="1.500"/></svg>
<svg class="abs" style="left:894px;top:663px" width="15" height="15" viewBox="0 0 15 15"><rect x="0.500" y="0.500" width="13" height="10" rx="1" fill="#b8b4a4" stroke="#a09c8c"/><rect x="2.500" y="2.500" width="9" height="6" fill="#dcd8c8"/><path d="M4 4.500h6M4 6.500h4" stroke="#a09c8c" stroke-width=".9"/><path d="M5 11h4v1.500h2.500v1.500h-9v-1.500H5z" fill="#b8b4a4"/></svg>
<div class="abs dd" style="left:915px;top:669px;border-top-color:#c0c0c0"></div>
<svg class="abs" style="left:929px;top:663px" width="16" height="16" viewBox="0 0 16 16"><rect x="0.500" y="3.500" width="12" height="11" fill="#fff" stroke="#7a86a8"/><rect x="1" y="4" width="11" height="2" fill="#4d78c8"/><path d="M12 8v6.500H4" fill="none" stroke="#e0b040" stroke-width="1.500"/><path d="M12 0l1.200 2.800L16 4l-2.800 1.200L12 8l-1.200-2.800L8 4l2.800-1.200z" fill="#f8e060" stroke="#b88a18" stroke-width=".7"/></svg>
<div class="abs dd" style="left:950px;top:669px"></div>
<div class="abs" style="left:967px;top:666px;width:10px;height:4px;border:1px solid #7d7a6b;background:#fff"></div><div class="abs" style="left:990px;top:666px;width:10px;height:10px;border:1px solid #7d7a6b;border-top-width:2px;background:#fff"></div>
<span class="abs" style="left:271.500px;top:687px;white-space:pre;letter-spacing:-0.121px">No consoles to display at this time.</span>
<div class="abs" style="left:271px;top:699px;width:737px;height:1px;background:#a8a498"></div>
<div class="abs" style="left:521px;top:841px;width:1px;height:21px;background:#a8a590"></div><div class="abs" style="left:522px;top:841px;width:1px;height:21px;background:#fff"></div>
<div class="abs" style="left:610px;top:841px;width:1px;height:21px;background:#a8a590"></div><div class="abs" style="left:611px;top:841px;width:1px;height:21px;background:#fff"></div>
<div class="abs" style="left:694px;top:841px;width:1px;height:21px;background:#a8a590"></div><div class="abs" style="left:695px;top:841px;width:1px;height:21px;background:#fff"></div>
<span class="abs" style="left:528px;top:846px;white-space:pre">Writable</span>
<span class="abs" style="left:617px;top:846px;white-space:pre">Insert</span>
<span class="abs" style="left:702px;top:846px;white-space:pre">1 : 7</span>
</body></html>
